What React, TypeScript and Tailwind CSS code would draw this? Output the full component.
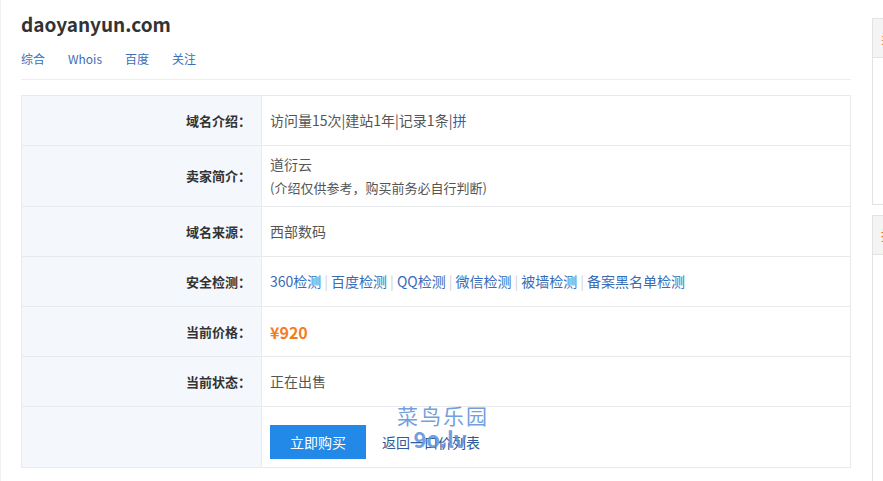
import React from "react";

const font = { fontFamily: '"Noto Sans CJK SC", "Noto Sans", sans-serif' };

function Row({
  label,
  children,
  className = "",
  first = false,
}: {
  label: string;
  children: React.ReactNode;
  className?: string;
  first?: boolean;
}) {
  return (
    <div className={`flex ${first ? "" : "border-t border-[#e8eaed]"}`}>
      <div className="w-[240px] shrink-0 bg-[#f4f8fd] border-r border-[#e8eaed] flex items-center justify-end pr-[10px] text-[13px] font-bold text-[#333]">
        {label}
      </div>
      <div className={`flex-1 pl-[8px] text-[14px] text-[#555] ${className}`}>{children}</div>
    </div>
  );
}

const checks = ["360检测", "百度检测", "QQ检测", "微信检测", "被墙检测", "备案黑名单检测"];

export default function App() {
  return (
    <div className="w-full h-[481px] overflow-hidden bg-white flex border-l border-[#f1f1f1]" style={font}>
      {/* main column */}
      <div className="w-[830px] shrink-0 ml-[20px]">
        <div className="pt-[10px] h-[38px] text-[19px] leading-[28px] font-bold text-[#333]">daoyanyun.com</div>
        <div className="mt-[11px] pb-[10px] border-b border-[#eeeeee] flex gap-[23px] text-[12px] leading-[20px] text-[#3d6db5]">
          <span>综合</span>
          <span>Whois</span>
          <span>百度</span>
          <span>关注</span>
        </div>

        <div className="mt-[15px] border border-[#e8eaed]">
          <Row label="域名介绍：" first className="h-[49px] flex items-center">
            <span>访问量15次|建站1年|记录1条|</span>
            <span className="text-[#2a66b8]">拼</span>
          </Row>
          <Row label="卖家简介：" className="py-[7px] leading-[23px]">
            <div>道衍云</div>
            <div className="text-[13px]">(介绍仅供参考，购买前务必自行判断)</div>
          </Row>
          <Row label="域名来源：" className="h-[49px] flex items-center">
            西部数码
          </Row>
          <Row label="安全检测：" className="h-[49px] flex items-center">
            {checks.map((c, i) => (
              <React.Fragment key={c}>
                {i > 0 && <span className="text-[#d0d0d0] px-[3px]">|</span>}
                <span className="text-[#3a6cb6]">{c}</span>
              </React.Fragment>
            ))}
          </Row>
          <Row label="当前价格：" className="h-[49px] flex items-center">
            <span className="text-[16px] font-bold text-[#f47b20]">¥920</span>
          </Row>
          <Row label="当前状态：" className="h-[49px] flex items-center">
            正在出售
          </Row>
          <Row label="" className="h-[60px] pt-[18px] relative">
            <div className="flex items-center">
              <button className="w-[96px] h-[34px] bg-[#2389e8] text-white text-[14px]">立即购买</button>
              <span className="ml-[16px] text-[#2c5a9c]">返回一口价列表</span>
            </div>
            <div className="absolute left-[135px] top-[-5px] pointer-events-none text-[#5b8fd6] opacity-85 text-center">
              <div className="text-[21px] leading-[26px] tracking-[2px]">菜鸟乐园</div>
              <div className="text-[22px] leading-[20px] ml-[-6px] font-bold">9o.lv</div>
            </div>
          </Row>
        </div>
      </div>

      {/* sidebar */}
      <div className="ml-[21px] w-[300px] shrink-0 pt-[18px]">
        <div className="border border-[#e3e3e3] h-[187px]">
          <div className="h-[39px] bg-[#f4f4f4] border-b border-[#e3e3e3] pl-[8px] flex items-center text-[13px] text-[#e0782a]">
            卖家其他域名
          </div>
        </div>
        <div className="mt-[10px] border border-[#e3e3e3] h-[300px]">
          <div className="h-[39px] bg-[#f4f4f4] border-b border-[#e3e3e3] pl-[8px] flex items-center text-[13px] text-[#e0782a]">
            推荐域名
          </div>
          <div className="pl-[10px] pt-[10px] flex flex-col gap-[34px]">
            {[0, 1, 2, 3].map((i) => (
              <div key={i} className="h-[33px] border border-[#e6e6e6]" />
            ))}
          </div>
        </div>
      </div>
    </div>
  );
}
